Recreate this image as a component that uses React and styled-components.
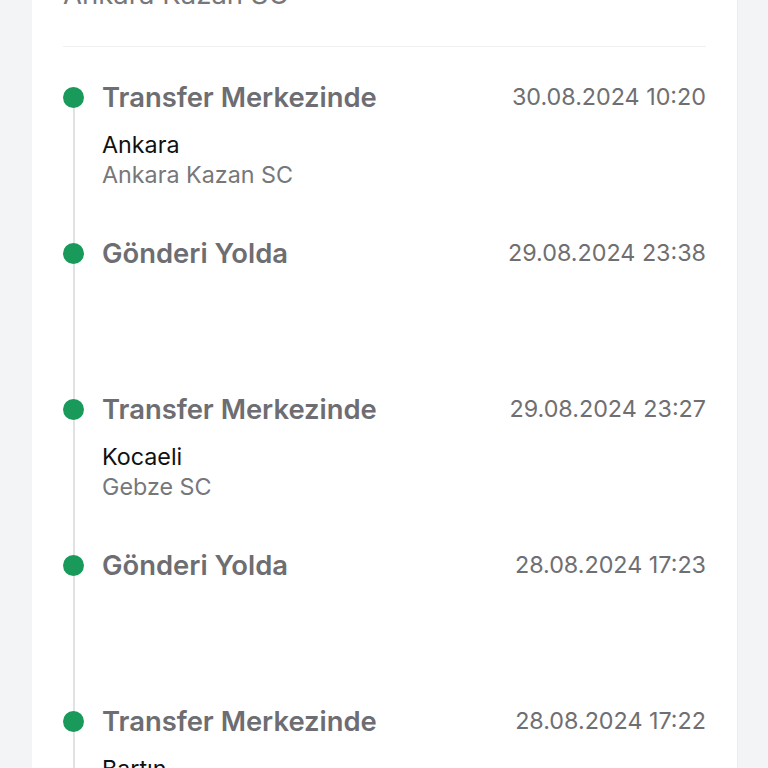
import React from "react";
import styled, { createGlobalStyle } from "styled-components";

const Global = createGlobalStyle`
  html, body { margin: 0; padding: 0; background: #f3f4f6; }
  body { font-family: Inter, "Noto Sans", sans-serif; -webkit-font-smoothing: antialiased; }
`;

const Page = styled.div`
  margin-top: -22px;
  padding: 0 30px 0 32px;
`;

const Card = styled.section`
  background: #ffffff;
  border-right: 1px solid #ececee;
  padding: 0 31px 40px 31px;
`;

const HeaderSub = styled.div`
  font-size: 27.5px;
  line-height: 32px;
  color: #77777a;
`;

const Divider = styled.hr`
  border: 0;
  height: 1px;
  background: #f0f0f1;
  margin: 36px 0 0 0;
`;

const List = styled.ol`
  list-style: none;
  margin: 0;
  padding: 34px 0 0 0;
`;

const Item = styled.li`
  display: grid;
  grid-template-columns: 21px 1fr;
  column-gap: 18px;
  height: 156px;
`;

const Rail = styled.div`
  padding-top: 6px;
  background: linear-gradient(#e2e2e4, #e2e2e4) no-repeat;
  background-size: 2px ${(p) => (p.$first ? "calc(100% - 16px)" : "100%")};
  background-position: 9.5px ${(p) => (p.$first ? "16px" : "0")};
`;

const Dot = styled.span`
  display: block;
  width: 21px;
  height: 21px;
  border-radius: 50%;
  background: #199a5b;
`;

const Content = styled.div`
  display: flex;
  flex-direction: column;
`;

const Head = styled.div`
  display: flex;
  justify-content: space-between;
  align-items: baseline;
`;

const Title = styled.span`
  font-size: 27.4px;
  line-height: 32px;
  font-weight: 600;
  color: #6d6d72;
`;

const Time = styled.span`
  font-size: 23.3px;
  line-height: 32px;
  color: #6f6f72;
  position: relative;
  top: -2px;
`;

const City = styled.div`
  margin-top: 15px;
  font-size: 23.3px;
  line-height: 30px;
  color: #111111;
`;

const Branch = styled.div`
  font-size: 23.3px;
  line-height: 30px;
  color: #77777a;
`;

const events = [
  { title: "Transfer Merkezinde", time: "30.08.2024 10:20", city: "Ankara", branch: "Ankara Kazan SC" },
  { title: "Gönderi Yolda", time: "29.08.2024 23:38" },
  { title: "Transfer Merkezinde", time: "29.08.2024 23:27", city: "Kocaeli", branch: "Gebze SC" },
  { title: "Gönderi Yolda", time: "28.08.2024 17:23" },
  { title: "Transfer Merkezinde", time: "28.08.2024 17:22", city: "Bartın", branch: "Bartın SC" },
];

export default function App() {
  return (
    <>
      <Global />
      <Page>
        <Card>
          <HeaderSub>Ankara Kazan SC</HeaderSub>
          <Divider />
          <List>
            {events.map((e, i) => (
              <Item key={i}>
                <Rail $first={i === 0}>
                  <Dot />
                </Rail>
                <Content>
                  <Head>
                    <Title>{e.title}</Title>
                    <Time>{e.time}</Time>
                  </Head>
                  {e.city && <City>{e.city}</City>}
                  {e.branch && <Branch>{e.branch}</Branch>}
                </Content>
              </Item>
            ))}
          </List>
        </Card>
      </Page>
    </>
  );
}
